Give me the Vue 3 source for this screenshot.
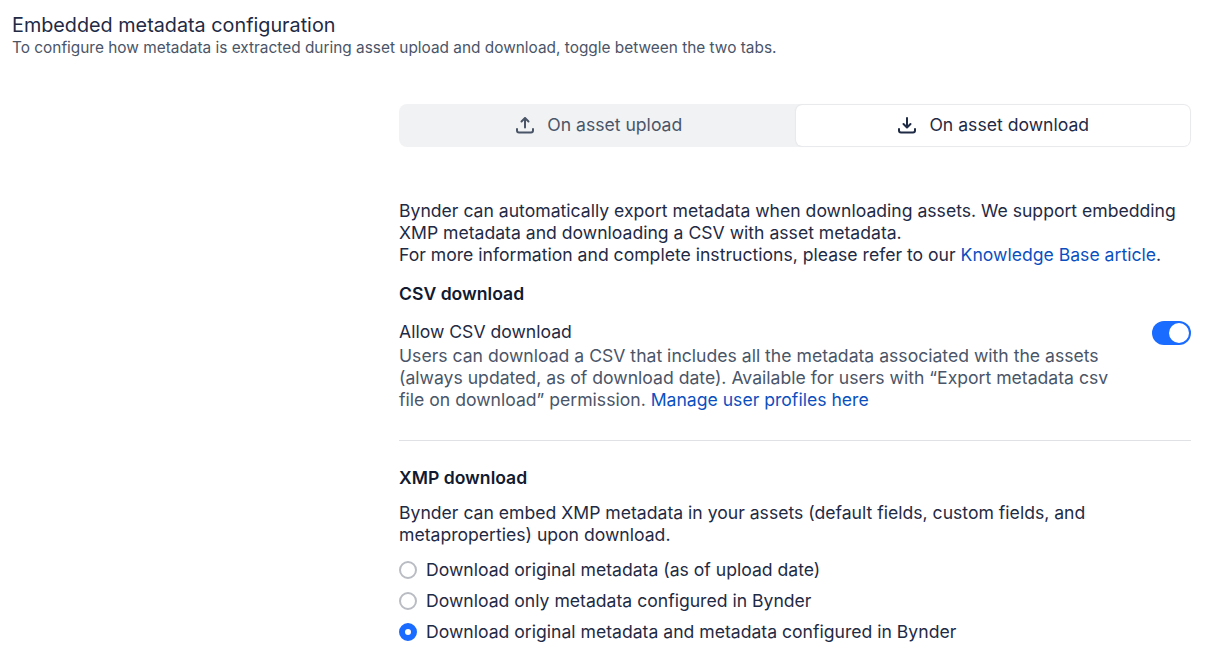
<script setup>
const options = [
  { label: 'Download original metadata (as of upload date)', checked: false },
  { label: 'Download only metadata configured in Bynder', checked: false },
  { label: 'Download original metadata and metadata configured in Bynder', checked: true }
]
</script>

<template>
  <div class="page">
    <header class="header">
      <h1 class="title">Embedded metadata configuration</h1>
      <p class="subtitle">To configure how metadata is extracted during asset upload and download, toggle between the two tabs.</p>
    </header>

    <main class="panel">
      <div class="tabs">
        <div class="tab">
          <svg class="tab-icon" width="20" height="20" viewBox="0 0 20 20" fill="none" stroke="currentColor" stroke-width="2" stroke-linecap="round" stroke-linejoin="round"><path d="M10 12.5V3.5"/><path d="M6.5 6.5 10 3l3.5 3.500"/><path d="M2 14v1.500c0 1.200.8 2 2 2h12c1.200 0 2-.8 2-2V14"/></svg>
          On asset upload
        </div>
        <div class="tab active">
          <svg class="tab-icon" width="20" height="20" viewBox="0 0 20 20" fill="none" stroke="currentColor" stroke-width="2" stroke-linecap="round" stroke-linejoin="round"><path d="M10 3v9"/><path d="M6.500 9 10 12.500 13.500 9"/><path d="M2 14v1.500c0 1.200.8 2 2 2h12c1.200 0 2-.8 2-2V14"/></svg>
          On asset download
        </div>
      </div>

      <p class="intro">
        Bynder can automatically export metadata when downloading assets. We support embedding XMP metadata and downloading a CSV with asset metadata.<br>
        For more information and complete instructions, please refer to our <a class="link">Knowledge Base article</a>.
      </p>

      <section class="csv">
        <h2 class="section-title">CSV download</h2>
        <div class="csv-row">
          <div class="csv-text">
            <div class="csv-label">Allow CSV download</div>
            <p class="csv-desc">Users can download a CSV that includes all the metadata associated with the assets (always updated, as of download date). Available for users with “Export metadata csv file on download” permission. <a class="link">Manage user profiles here</a></p>
          </div>
          <span class="toggle"><span class="knob"></span></span>
        </div>
      </section>

      <hr class="divider">

      <section>
        <h2 class="section-title">XMP download</h2>
        <p class="xmp-desc">Bynder can embed XMP metadata in your assets (default fields, custom fields, and metaproperties) upon download.</p>
        <div class="radios">
          <label v-for="o in options" :key="o.label" class="radio-row">
            <span class="radio" :class="{ checked: o.checked }"></span>
            {{ o.label }}
          </label>
        </div>
      </section>
    </main>
  </div>
</template>

<style>
html, body {
  margin: 0;
  background: #fff;
}
</style>

<style scoped>
.page {
  height: 658px;
  overflow: hidden;
  box-sizing: border-box;
  padding: 13px 12px 0;
  font-family: Inter, "Liberation Sans", sans-serif;
  color: #1f2a44;
}

.title {
  margin: 0;
  font-size: 19.8px;
  line-height: 24px;
  font-weight: 400;
}

.subtitle {
  margin: 0;
  font-size: 15.4px;
  line-height: 22px;
  color: #4a5568;
}

.panel {
  width: 792px;
  margin: 45px 0 0 387px;
  font-size: 17.6px;
  line-height: 22px;
}

.tabs {
  display: flex;
  height: 43px;
  background: #f1f2f4;
  border-radius: 8px;
}

.tab {
  flex: 1;
  display: flex;
  align-items: center;
  justify-content: center;
  gap: 12px;
  padding: 0 0 1px 3px;
  color: #4a5568;
}

.tab.active {
  margin: 1px 1px 1px 0;
  padding: 0 0 2px 1px;
  background: #fff;
  color: #1f2a44;
  border-radius: 6px;
  box-shadow: 0 0 2px rgba(20, 30, 50, 0.14);
}

.intro {
  margin: 53px 0 0;
}

.link {
  color: #0b4fbf;
}

.csv {
  margin-top: 17px;
}

.section-title {
  margin: 0;
  font-size: 17.6px;
  line-height: 22px;
  font-weight: 600;
  color: #111a30;
}

.csv-row {
  display: flex;
  justify-content: space-between;
  align-items: flex-start;
  margin-top: 16px;
}

.csv-text {
  width: 720px;
}

.csv-label {
  margin-bottom: 2px;
}

.csv-desc {
  margin: 0;
  color: #4a5568;
}

.toggle {
  display: flex;
  justify-content: flex-end;
  align-items: center;
  box-sizing: border-box;
  width: 39px;
  height: 24px;
  padding-right: 2px;
  background: #1a6bff;
  border-radius: 12px;
}

.knob {
  width: 20px;
  height: 20px;
  background: #fff;
  border-radius: 50%;
}

.divider {
  height: 1px;
  margin: 29px 0 26px;
  border: 0;
  background: #dfe1e5;
}

.xmp-desc {
  margin: 13px 0 0;
}

.radios {
  display: flex;
  flex-direction: column;
  gap: 9px;
  margin-top: 13px;
}

.radio-row {
  display: flex;
  align-items: center;
  gap: 9px;
}

.radio {
  box-sizing: border-box;
  width: 18px;
  height: 18px;
  border: 2px solid #b9bcc3;
  border-radius: 50%;
  background: #fff;
}

.radio.checked {
  border: 6px solid #1a6bff;
}
</style>
